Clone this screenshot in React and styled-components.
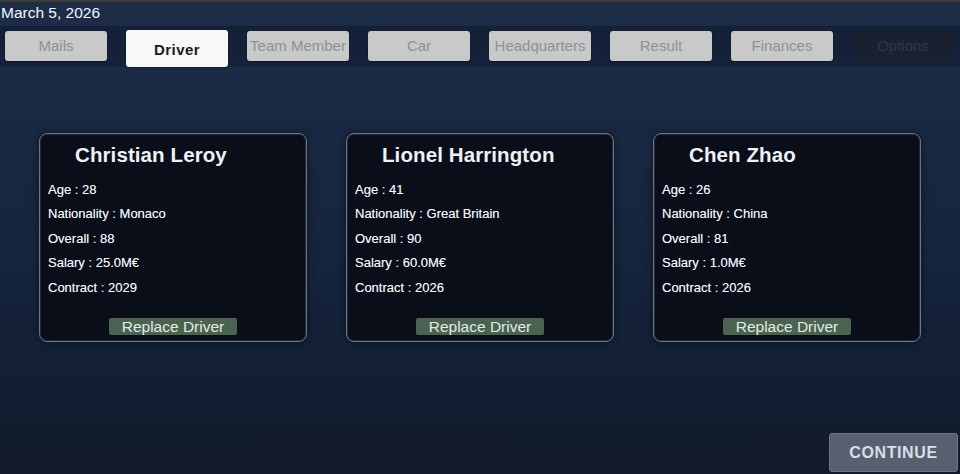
import React from "react";
import styled, { createGlobalStyle } from "styled-components";

const Global = createGlobalStyle`
  html, body { margin: 0; padding: 0; background: #111a2b; }
  body { width: 960px; height: 474px; overflow: hidden; font-family: "Liberation Sans", Arial, sans-serif; }
  * { box-sizing: border-box; }
`;

const Page = styled.div`
  width: 960px;
  height: 474px;
  display: flex;
  flex-direction: column;
  background: linear-gradient(180deg, #1d2d48 0%, #1b2a45 18%, #15233b 60%, #111a2b 100%);
  color: #fff;
`;

const TopStrip = styled.div`
  height: 3px;
  background: #3a3b3f;
  border-bottom: 1px solid #2a2f38;
`;

const DateLabel = styled.div`
  height: 23px;
  padding-left: 1px;
  font-size: 15.5px;
  line-height: 20px;
  color: #f4f6fa;
`;

const TabBar = styled.div`
  height: 41px;
  display: flex;
  align-items: flex-start;
  gap: 19px;
  padding: 4px 0 0 5px;
  background: linear-gradient(180deg, #132037 0%, #15223b 100%);
`;

const Tab = styled.div`
  flex: none;
  width: 102px;
  height: ${(p) => (p.$active ? "37px" : "30px")};
  margin-top: ${(p) => (p.$active ? "0" : "1px")};
  border-radius: 3px;
  display: flex;
  align-items: center;
  justify-content: center;
  font-size: 15px;
  font-weight: ${(p) => (p.$active ? 700 : 400)};
  letter-spacing: ${(p) => (p.$active ? "0.4px" : "0")};
  white-space: nowrap;
  background: ${(p) => (p.$active ? "#f8f8f8" : p.$disabled ? "#192130" : "#c8c9c8")};
  color: ${(p) => (p.$active ? "#1a1c20" : p.$disabled ? "#2e3646" : "#8d9293")};
  box-shadow: ${(p) => (p.$disabled ? "none" : "0 1px 2px rgba(0,0,0,0.35)")};
  padding: ${(p) => (p.$active ? "1px 0 0" : "0 0 2px")};
`;

const CardRow = styled.div`
  display: flex;
  gap: 39px;
  padding: 66px 0 0 39px;
`;

const Card = styled.div`
  width: 268px;
  height: 209px;
  display: flex;
  flex-direction: column;
  padding: 7px 0 6px 0;
  background: #090e19;
  border: 1px solid #6a768a;
  border-radius: 8px;
  box-shadow: 0 0 0 1px rgba(20, 28, 42, 0.9), inset 0 0 0 1px rgba(40, 50, 66, 0.8), 0 0 8px rgba(0, 0, 0, 0.45);
`;

const Name = styled.div`
  padding-left: 35px;
  font-size: 20.5px;
  font-weight: 700;
  line-height: 28px;
  color: #eef1f6;
  letter-spacing: 0.1px;
`;

const InfoList = styled.div`
  margin-top: 8.5px;
  padding-left: 8px;
  display: flex;
  flex-direction: column;
`;

const InfoLine = styled.div`
  font-size: 13px;
  line-height: 24.5px;
  color: #f2f4f8;
  text-shadow: 0 0 0.4px rgba(255, 255, 255, 0.6);
`;

const ReplaceButton = styled.div`
  margin-top: auto;
  align-self: center;
  width: 128px;
  height: 17px;
  border-radius: 2px;
  background: #4a6350;
  color: #e3ebe3;
  font-size: 15.5px;
  line-height: 17px;
  text-align: center;
  white-space: nowrap;
`;

const Footer = styled.div`
  margin-top: auto;
  display: flex;
  justify-content: flex-end;
  padding: 0 2px 2px 0;
`;

const ContinueButton = styled.div`
  width: 129px;
  height: 39px;
  border-radius: 3px;
  background: #56606e;
  border: 1px solid #6c7686;
  display: flex;
  align-items: center;
  justify-content: center;
  font-size: 16px;
  font-weight: 700;
  letter-spacing: 0.6px;
  color: #d9dee6;
  padding-top: 1px;
`;

const tabs = ["Mails", "Driver", "Team Member", "Car", "Headquarters", "Result", "Finances", "Options"];

const drivers = [
  { name: "Christian Leroy", age: 28, nat: "Monaco", overall: 88, salary: "25.0M€", contract: 2029 },
  { name: "Lionel Harrington", age: 41, nat: "Great Britain", overall: 90, salary: "60.0M€", contract: 2026 },
  { name: "Chen Zhao", age: 26, nat: "China", overall: 81, salary: "1.0M€", contract: 2026 },
];

export default function App() {
  return (
    <>
      <Global />
      <Page>
        <TopStrip />
        <DateLabel>March 5, 2026</DateLabel>
        <TabBar>
          {tabs.map((t) => (
            <Tab key={t} $active={t === "Driver"} $disabled={t === "Options"}>
              {t}
            </Tab>
          ))}
        </TabBar>
        <CardRow>
          {drivers.map((d) => (
            <Card key={d.name}>
              <Name>{d.name}</Name>
              <InfoList>
                <InfoLine>Age : {d.age}</InfoLine>
                <InfoLine>Nationality : {d.nat}</InfoLine>
                <InfoLine>Overall : {d.overall}</InfoLine>
                <InfoLine>Salary : {d.salary}</InfoLine>
                <InfoLine>Contract : {d.contract}</InfoLine>
              </InfoList>
              <ReplaceButton>Replace Driver</ReplaceButton>
            </Card>
          ))}
        </CardRow>
        <Footer>
          <ContinueButton>CONTINUE</ContinueButton>
        </Footer>
      </Page>
    </>
  );
}
